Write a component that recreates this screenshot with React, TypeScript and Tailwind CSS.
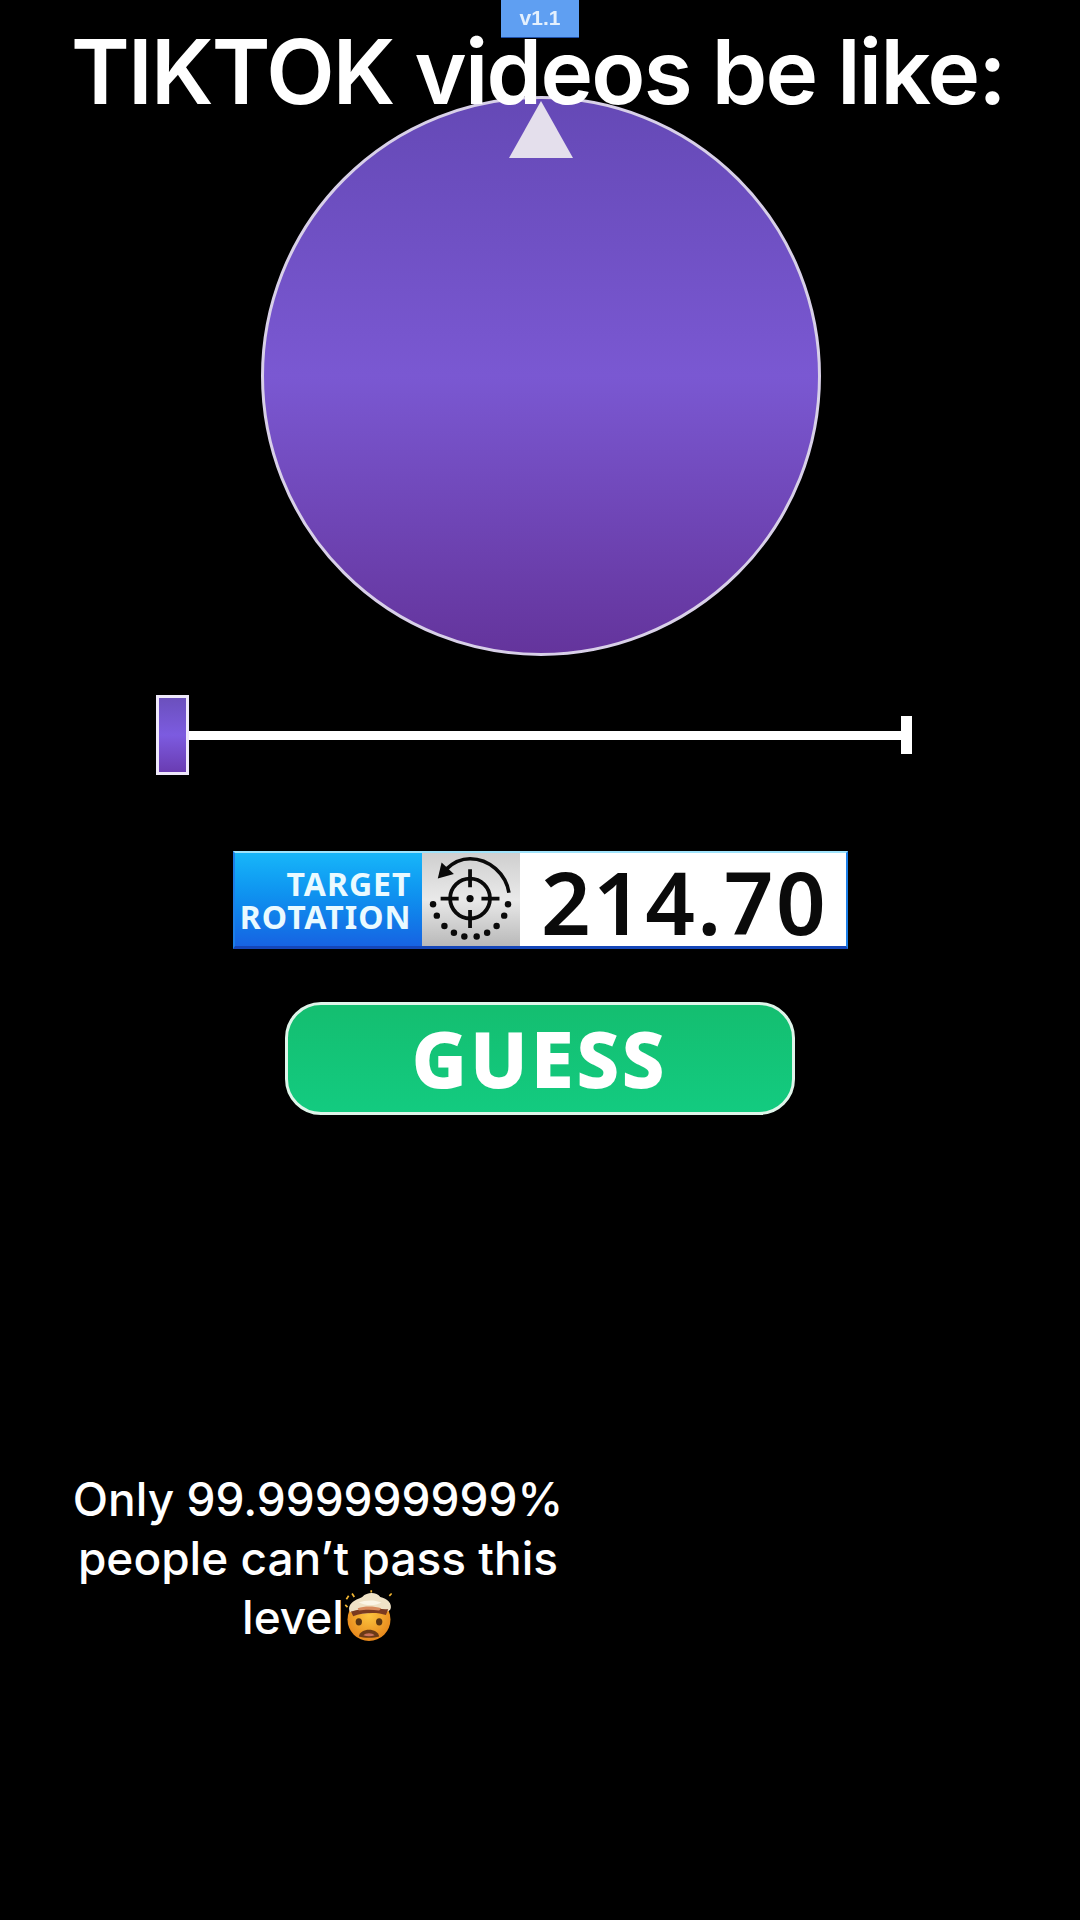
const dots = [
  [9, 54],
  [13, 66],
  [21, 77],
  [31, 84],
  [42, 88],
  [55, 88],
  [66, 84],
  [76, 77],
  [84, 66],
  [88, 54],
];

function TargetIcon() {
  return (
    <svg viewBox="0 0 98 98" className="h-full w-full" fill="none" stroke="#0a0a0a">
      <path d="M89 42 C86 22 68 6 48 6 C38 6 30 10 23 17" strokeWidth="3.8" />
      <path d="M14 27 L18 10 L31 22 Z" fill="#0a0a0a" stroke="none" />
      <circle cx="48" cy="48" r="21" strokeWidth="4" />
      <path d="M48 17 V36 M48 60 V79 M17 48 H36 M60 48 H79" strokeWidth="4" />
      <circle cx="48" cy="48" r="3.8" fill="#0a0a0a" stroke="none" />
      {dots.map(([cx, cy]) => (
        <circle key={`${cx}-${cy}`} cx={cx} cy={cy} r="3.4" fill="#0a0a0a" stroke="none" />
      ))}
    </svg>
  );
}

function ExplodingHead() {
  return (
    <svg viewBox="2 2 44 46" className="h-full w-full">
      <defs>
        <radialGradient id="face" cx="50%" cy="40%" r="62%">
          <stop offset="0%" stopColor="#fdc53e" />
          <stop offset="100%" stopColor="#e5841a" />
        </radialGradient>
      </defs>
      <circle cx="24" cy="29" r="19" fill="url(#face)" />
      <path d="M7 22 C4 14 14 11 18 9 C23 4 31 5 34 9 C40 10 45 15 43 20 C40 24 34 22 26 23 C18 24 10 25 7 22 Z" fill="#efe2c6" />
      <path d="M15 14 C20 12 28 11 35 14 C30 17 21 17 15 14 Z" fill="#fbf5e6" />
      <path d="M8 22 C16 19 32 19 41 20 L39 25 C31 22 18 23 10 26 Z" fill="#7a3a20" />
      <path d="M14 19 C20 17 28 17 35 19 L33 21 C27 20 20 20 15 21 Z" fill="#d88a5c" />
      <path d="M4 11 L6 8 M42 8 L44 6 M5 18 L3 16 M9 6 L11 9 M26 5 L26 3" stroke="#f2b632" strokeWidth="1.5" />
      <ellipse cx="15" cy="31" rx="2.8" ry="3.2" fill="#5a3512" />
      <ellipse cx="33" cy="31" rx="2.8" ry="3.2" fill="#5a3512" />
      <path d="M15 44 C16 36 32 36 33 44 C29 45.5 19 45.5 15 44 Z" fill="#6b3a16" />
      <path d="M19 43 C21 40.5 27 40.5 29 43 C26 44 22 44 19 43 Z" fill="#c9705a" />
    </svg>
  );
}

export default function App() {
  return (
    <div className="relative flex h-[1920px] w-[1080px] flex-col items-center overflow-hidden bg-black font-['Inter',sans-serif]">
      <div className="flex h-[38px] w-[78px] items-center justify-center border-b border-[#1d4ea8] bg-[#5f9ff2] pb-0.5 font-['Liberation_Sans',sans-serif] text-[21px] font-bold text-[#e4f0fd] blur-[0.5px]">
        v1.1
      </div>

      <h1 className="absolute left-[71px] top-[20px] z-10 whitespace-nowrap text-[89px] leading-[104px] font-semibold tracking-[-1.7px] text-white">
        TIKTOK videos be like:
      </h1>

      <div className="relative mt-[58px] ml-[2px] h-[560px] w-[560px] rounded-full border-[3px] border-[#d8d0e8] bg-linear-to-b from-[#6549b6] via-[#7a58d2] via-50% to-[#64349c] blur-[0.4px]">
        <div className="absolute left-1/2 top-[2px] h-[57px] w-[64px] -translate-x-1/2 bg-[#e4dfec] [clip-path:polygon(50%_0,100%_100%,0_100%)]" />
      </div>

      <div className="mt-[39px] mr-[12px] flex h-[80px] w-[756px] items-center">
        <div className="h-[80px] w-[33px] border-[3px] border-[#efe9fb] bg-linear-to-b from-[#6b50bd] via-[#7c5be0] to-[#6a3cb2]" />
        <div className="h-[9px] flex-1 bg-white" />
        <div className="h-[38px] w-[11px] bg-white" />
      </div>

      <div className="mt-[76px] flex h-[98px] w-[615px] border-x-2 border-t-2 border-b-[3px] border-x-[#1c7fe8] border-t-[#9fe3fb] border-b-[#1546b8] bg-white blur-[0.4px]">
        <div className="flex w-[187px] flex-col items-end justify-center bg-linear-to-b from-[#18b6f9] to-[#1763e2] pr-[10px] font-['Noto_Sans',sans-serif] text-[32px] leading-[33px] font-bold tracking-[1px] text-[#eafaff]">
          <span>TARGET</span>
          <span>ROTATION</span>
        </div>
        <div className="w-[98px] bg-linear-to-b from-[#cfcfcf] via-[#e9e9e9] to-[#b9b9b9]">
          <TargetIcon />
        </div>
        <div className="flex flex-1 items-center justify-center pl-[4px] pt-[4px] font-['Noto_Sans',sans-serif] text-[87px] leading-none font-semibold tracking-[2.4px] text-[#0a0a0a]">
          214.70
        </div>
      </div>

      <button className="mt-[53px] flex h-[113px] w-[510px] items-center justify-center rounded-[36px] border-[3px] border-[#dff5ea] bg-linear-to-b from-[#14be70] to-[#13cb80] font-['Noto_Sans',sans-serif] text-[75px] font-bold tracking-[4px] text-white blur-[0.4px] [-webkit-text-stroke:2px_white]">
        GUESS
      </button>

      <div className="mt-[355px] mr-[444px] w-[520px] text-center text-[46px] leading-[59px] font-medium text-white">
        <p>Only 99.999999999%</p>
        <p>people can’t pass this</p>
        <p className="flex items-center justify-center">
          level
          <span className="-mt-[6px] inline-block h-[52px] w-[50px]">
            <ExplodingHead />
          </span>
        </p>
      </div>
    </div>
  );
}
